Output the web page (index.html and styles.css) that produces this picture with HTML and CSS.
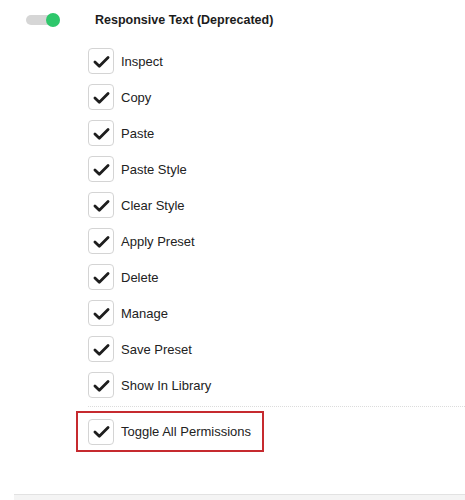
FILE: index.html
```html
<!DOCTYPE html>
<html>
<head>
<meta charset="utf-8" />
<title>Permissions</title>
<link rel="stylesheet" href="styles.css">
</head>
<body>
<div class="panel">
  <div class="head">
    <span class="switch"><span class="knob"></span></span>
    <span class="title">Responsive Text (Deprecated)</span>
  </div>
  <ul class="perms">
    <li><span class="box"><svg viewBox="0 0 24 24"><path d="M4.5 12.5l5 5L19.5 7.5"/></svg></span>Inspect</li>
    <li><span class="box"><svg viewBox="0 0 24 24"><path d="M4.5 12.5l5 5L19.5 7.5"/></svg></span>Copy</li>
    <li><span class="box"><svg viewBox="0 0 24 24"><path d="M4.5 12.5l5 5L19.5 7.5"/></svg></span>Paste</li>
    <li><span class="box"><svg viewBox="0 0 24 24"><path d="M4.5 12.5l5 5L19.5 7.5"/></svg></span>Paste Style</li>
    <li><span class="box"><svg viewBox="0 0 24 24"><path d="M4.5 12.5l5 5L19.5 7.5"/></svg></span>Clear Style</li>
    <li><span class="box"><svg viewBox="0 0 24 24"><path d="M4.5 12.5l5 5L19.5 7.5"/></svg></span>Apply Preset</li>
    <li><span class="box"><svg viewBox="0 0 24 24"><path d="M4.5 12.5l5 5L19.5 7.5"/></svg></span>Delete</li>
    <li><span class="box"><svg viewBox="0 0 24 24"><path d="M4.5 12.5l5 5L19.5 7.5"/></svg></span>Manage</li>
    <li><span class="box"><svg viewBox="0 0 24 24"><path d="M4.5 12.5l5 5L19.5 7.5"/></svg></span>Save Preset</li>
    <li><span class="box"><svg viewBox="0 0 24 24"><path d="M4.5 12.5l5 5L19.5 7.5"/></svg></span>Show In Library</li>
  </ul>
  <div class="all">
    <div class="mark">
      <span class="box"><svg viewBox="0 0 24 24"><path d="M4.5 12.5l5 5L19.5 7.5"/></svg></span>Toggle All Permissions
    </div>
  </div>
</div>
<div class="foot"></div>
</body>
</html>
```

FILE: styles.css
```css
body {
margin: 0;
background: #fff;
font-family: "Liberation Sans", Arial, sans-serif;
font-size: 13px;
color: #222; }
.panel { height: 494px; }
.head {
display: flex;
align-items: center;
height: 40px;
padding-left: 26px; }
.switch {
position: relative;
width: 34px;
height: 10px;
border-radius: 5px;
background: #d6d6d6; }
.knob {
position: absolute;
right: 0;
top: -2px;
width: 14px;
height: 14px;
border-radius: 50%;
background: #2ec76b; }
.title {
margin-left: 35px;
font-weight: bold;
font-size: 12.5px;
color: #1c1c1c; }
.perms {
list-style: none;
margin: 3px 0 0;
padding: 0 0 0 88px; }
.perms li {
display: flex;
align-items: center;
height: 36px; }
.box {
display: inline-flex;
align-items: center;
justify-content: center;
box-sizing: border-box;
width: 26px;
height: 26px;
margin-right: 7px;
border: 1px solid #d4d4d4;
border-radius: 4px;
background: #fff; }
.box svg {
width: 21px;
height: 21px;
fill: none;
stroke: #1e1e1e;
stroke-width: 3.2;
stroke-linecap: round;
stroke-linejoin: round; }
.all {
margin: 3px 0 0 88px;
padding-top: 4px;
border-top: 1px dotted #dcdcdc; }
.mark {
display: flex;
align-items: center;
box-sizing: border-box;
width: 188px;
height: 41px;
margin-left: -12px;
padding-left: 10px;
border: 2px solid #c62a2f; }
.foot {
margin-left: 14px;
height: 6px;
background: #f4f4f4;
border-top: 1px solid #e2e2e2; }
```
